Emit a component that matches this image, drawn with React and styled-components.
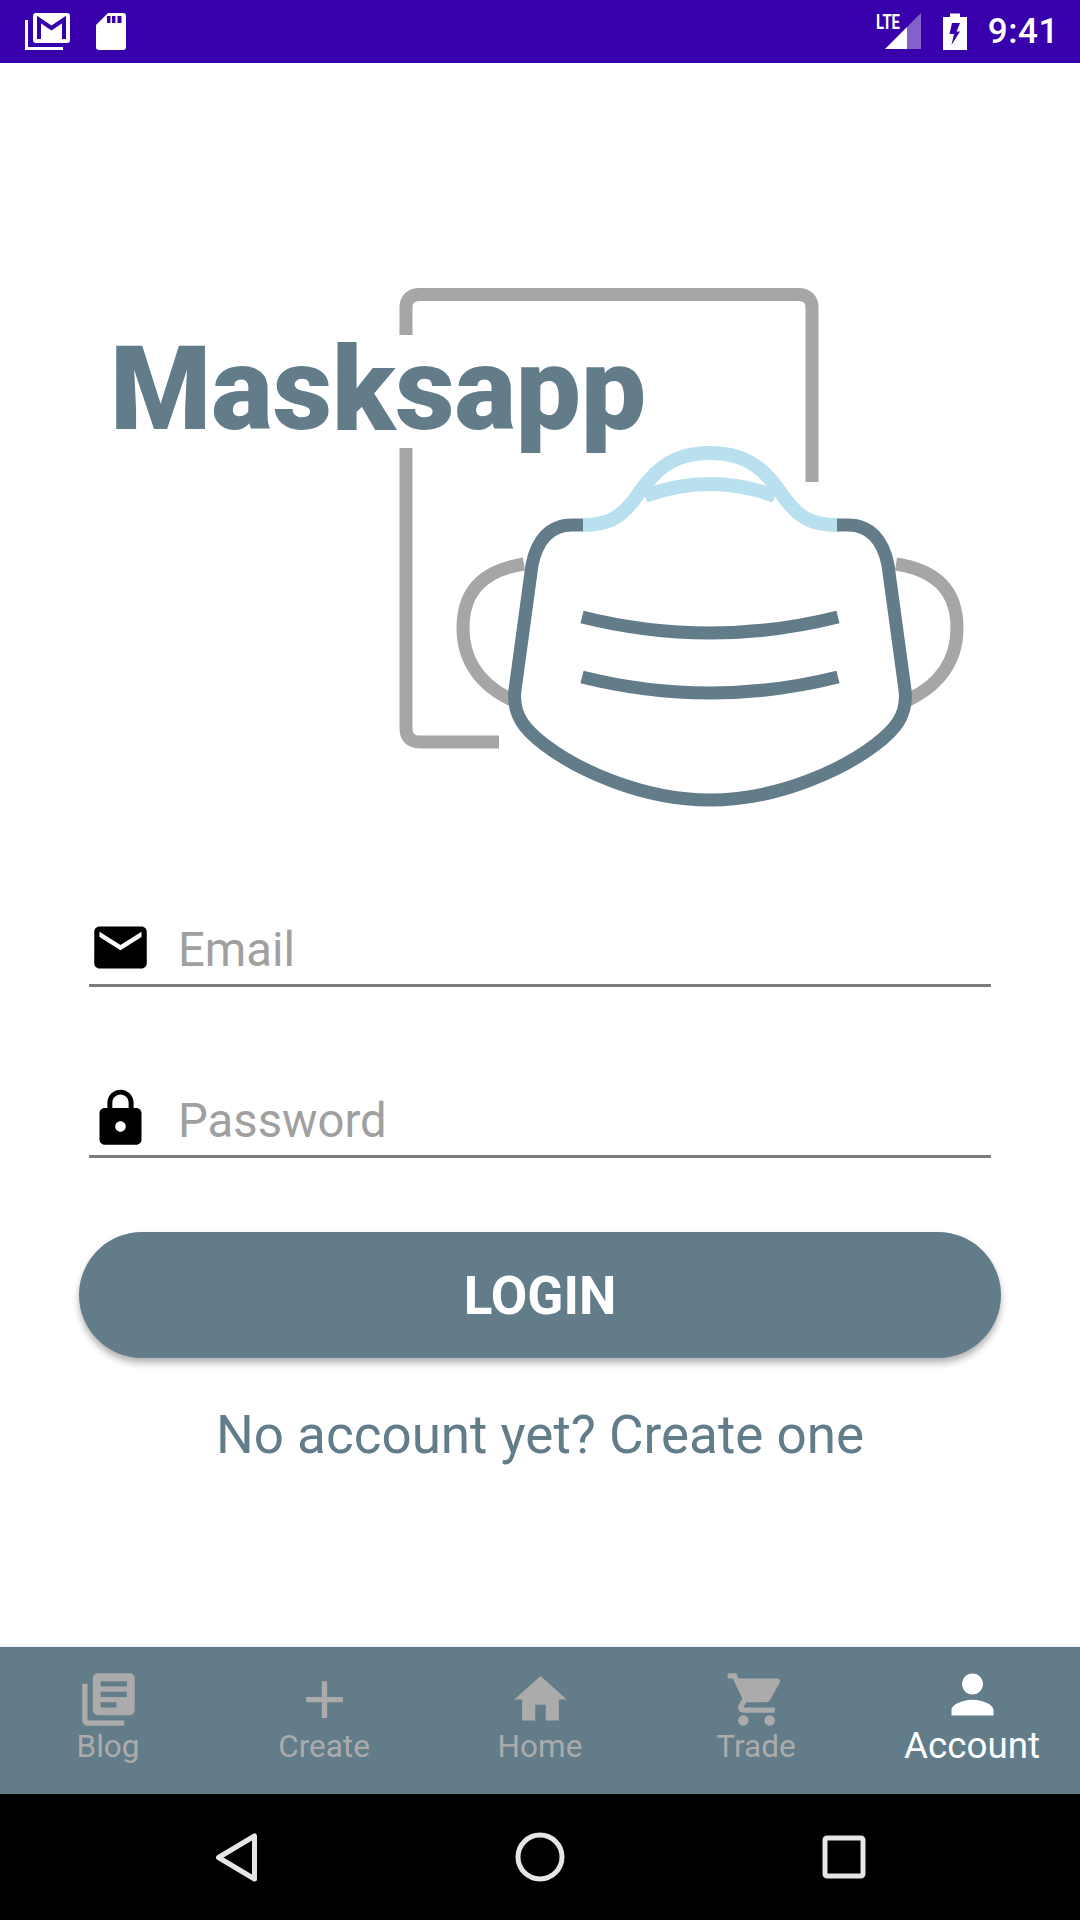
import React from 'react';
import styled, { createGlobalStyle } from 'styled-components';

const GlobalStyle = createGlobalStyle`
  html, body {
    margin: 0;
    padding: 0;
    background: #fff;
    font-family: Roboto, "Liberation Sans", sans-serif;
  }
`;

const Screen = styled.div`
  width: 1080px;
  height: 1920px;
  display: flex;
  flex-direction: column;
  overflow: hidden;
`;

const StatusBar = styled.header`
  height: 63px;
  flex: none;
  background: #3700ab;
  display: flex;
  justify-content: space-between;
  align-items: center;
  padding: 0 21px 0 24px;
  box-sizing: border-box;
`;

const StatusGroup = styled.div`
  display: flex;
  align-items: center;
  gap: ${(props) => props.$gap}px;
`;

const Clock = styled.span`
  color: #fff;
  font-size: 35px;
  font-weight: 500;
  line-height: 41px;
  letter-spacing: 0.6px;
`;

const Main = styled.main`
  flex: 1;
  display: flex;
  flex-direction: column;
  align-items: center;
  background: #fff;
`;

const Logo = styled.svg`
  display: block;
  width: 900px;
  height: 550px;
  margin-top: 207px;
  flex: none;
`;

const Form = styled.form`
  display: flex;
  flex-direction: column;
  align-items: center;
  margin-top: 95px;
`;

const Field = styled.label`
  width: 902px;
  height: 72px;
  margin-bottom: 99px;
  display: flex;
  gap: 26px;
  border-bottom: 3px solid #7c7c7c;
  box-sizing: border-box;
  svg {
    width: 63px;
    height: 63px;
    margin-top: 1px;
    fill: #000;
    flex: none;
  }
`;

const FieldText = styled.span`
  color: #a0a0a0;
  font-size: 47.25px;
  line-height: 55px;
  padding-top: 8px;
`;

const LoginButton = styled.button`
  width: 922px;
  height: 126px;
  margin-top: -25px;
  padding: 2px 0 0;
  border: 0;
  border-radius: 63px;
  background: #627c8a;
  color: #fff;
  font-family: Roboto, sans-serif;
  font-size: 53px;
  font-weight: 700;
  box-shadow: 0 5px 7px rgba(0, 0, 0, 0.3);
`;

const SignupLink = styled.a`
  margin-top: 46px;
  color: #627c8a;
  font-size: 53px;
  line-height: 62px;
`;

const BottomNav = styled.nav`
  height: 147px;
  flex: none;
  background: #627c8a;
  display: grid;
  grid-template-columns: repeat(5, 1fr);
  box-shadow: 0 -1px 4px rgba(0, 0, 0, 0.08);
`;

const NavItem = styled.div`
  display: flex;
  flex-direction: column;
  align-items: center;
  padding-top: ${(props) => (props.$active ? '15.75px' : '21px')};
  color: ${(props) => (props.$active ? '#fff' : '#ababab')};
  svg {
    width: 63px;
    height: 63px;
    fill: currentColor;
  }
`;

const NavLabel = styled.span`
  font-size: ${(props) => (props.$active ? '36.75px' : '31.5px')};
  line-height: ${(props) => (props.$active ? '43px' : '37px')};
  margin-top: ${(props) => (props.$active ? '-2px' : '-3px')};
`;

const SystemBar = styled.div`
  height: 126px;
  flex: none;
  background: #000;
  display: flex;
  justify-content: center;
  align-items: center;
  gap: 243px;
  svg {
    width: 60px;
    height: 60px;
    fill: none;
    stroke: #e6e6e6;
    stroke-width: 5;
    stroke-linejoin: round;
  }
`;

const navItems = [
  {
    label: 'Blog',
    path: 'M4 6H2v14c0 1.1.9 2 2 2h14v-2H4V6zm16-4H8c-1.1 0-2 .9-2 2v12c0 1.1.9 2 2 2h12c1.1 0 2-.9 2-2V4c0-1.1-.9-2-2-2zm-1 9H9V9h10v2zm-4 4H9v-2h6v2zm4-8H9V5h10v2z',
  },
  { label: 'Create', path: 'M19 13h-6v6h-2v-6H5v-2h6V5h2v6h6v2z' },
  { label: 'Home', path: 'M10 20v-6h4v6h5v-8h3L12 3 2 12h3v8z' },
  {
    label: 'Trade',
    path: 'M7 18c-1.1 0-1.99.9-1.99 2S5.9 22 7 22s2-.9 2-2-.9-2-2-2zM1 2v2h2l3.6 7.59-1.35 2.45c-.16.28-.25.61-.25.96 0 1.1.9 2 2 2h12v-2H7.42c-.14 0-.25-.11-.25-.25l.03-.12.9-1.63h7.45c.75 0 1.41-.41 1.75-1.03l3.58-6.49c.08-.14.12-.31.12-.48 0-.55-.45-1-1-1H5.21l-.94-2H1zm16 16c-1.1 0-1.99.9-1.99 2s.89 2 1.99 2 2-.9 2-2-.9-2-2-2z',
  },
  {
    label: 'Account',
    active: true,
    path: 'M12 12c2.21 0 4-1.79 4-4s-1.79-4-4-4-4 1.79-4 4 1.79 4 4 4zm0 2c-2.67 0-8 1.34-8 4v2h16v-2c0-2.66-5.33-4-8-4z',
  },
];

const StatusIcons = () => (
  <StatusGroup $gap={23}>
    <svg width="48" height="40" viewBox="24 12 48 40">
      <rect x="33" y="13" width="37" height="30" rx="3" fill="#fff" />
      <path d="M39 39V19.5L51.5 28L64 19.5V39" fill="none" stroke="#3700ab" strokeWidth="4" />
      <path d="M26.5 20V48.5H63" fill="none" stroke="#fff" strokeWidth="3" />
    </svg>
    <svg width="32" height="40" viewBox="95 12 32 40">
      <path
        d="M108 13H123a3 3 0 0 1 3 3V47a3 3 0 0 1-3 3H99a3 3 0 0 1-3-3V25Z"
        fill="#fff"
      />
      <path d="M107 16h3.5v7H107zM112 16h3.5v7H112zM117.5 16h4v7h-4z" fill="#3700ab" />
    </svg>
  </StatusGroup>
);

const StatusRight = () => (
  <StatusGroup $gap={20}>
    <svg width="48" height="52" viewBox="874 6 48 52">
      <path d="M907 27L921 13V49H907Z" fill="#fff" opacity="0.38" />
      <path d="M885 49L907 27V49Z" fill="#fff" />
      <text
        x="876"
        y="29"
        fontFamily="Roboto, sans-serif"
        fontWeight="700"
        fontSize="20"
        fill="#fff"
        textLength="24"
        lengthAdjust="spacingAndGlyphs"
      >
        LTE
      </text>
    </svg>
    <svg width="26" height="42" viewBox="942 10 26 42">
      <path d="M950 12.5H960V16H967V49H943V16H950Z" fill="#fff" />
      <path d="M952 22H960L956.5 30.5H960L951.5 44L954 33H949.5Z" fill="#3700ab" />
    </svg>
    <Clock>9:41</Clock>
  </StatusGroup>
);

const LogoMark = () => (
  <Logo viewBox="90 270 900 550">
    <g fill="none" stroke="#a6a6a6" strokeWidth="13">
      <path d="M406 335V308Q406 294.5 420 294.5H798Q812 294.5 812 308V482" />
      <path d="M406 448V728Q406 742 420 742H499" />
      <path d="M524 564C485 570 463 590 463 628C463 660 480 685 512 700" />
      <path d="M896 564C935 570 957 590 957 628C957 660 940 685 908 700" />
    </g>
    <text
      x="110"
      y="429"
      fontFamily="Roboto, sans-serif"
      fontWeight="900"
      fontSize="117"
      fill="#627c8a"
      textLength="536"
      lengthAdjust="spacingAndGlyphs"
    >
      Masksapp
    </text>
    <g fill="none" stroke="#b9e0ee" strokeWidth="14">
      <path d="M583 525C608 525 620 518 634 500C650 478 665 453 710 453C755 453 770 478 786 500C800 518 812 525 837 525" />
      <path d="M645 496Q710 472 775 496" />
    </g>
    <g fill="none" stroke="#627c8a">
      <path
        strokeWidth="13"
        d="M583 525H572C550 525 537 540 532 565L515 690C512 715 525 730 545 745C575 768 640 800 710 800C780 800 845 768 875 745C895 730 908 715 905 690L888 565C883 540 870 525 848 525H837"
      />
      <path strokeWidth="13" d="M582 617Q710 649 838 617" />
      <path strokeWidth="13" d="M582 677Q710 709 838 677" />
    </g>
  </Logo>
);

const App = () => {
  return (
    <Screen>
      <GlobalStyle />
      <StatusBar>
        <StatusIcons />
        <StatusRight />
      </StatusBar>
      <Main>
        <LogoMark />
        <Form>
          <Field>
            <svg viewBox="0 0 24 24">
              <path d="M20 4H4c-1.1 0-1.99.9-1.99 2L2 18c0 1.1.9 2 2 2h16c1.1 0 2-.9 2-2V6c0-1.1-.9-2-2-2zm0 4l-8 5-8-5V6l8 5 8-5v2z" />
            </svg>
            <FieldText>Email</FieldText>
          </Field>
          <Field>
            <svg viewBox="0 0 24 24">
              <path d="M18 8h-1V6c0-2.76-2.24-5-5-5S7 3.24 7 6v2H6c-1.1 0-2 .9-2 2v10c0 1.1.9 2 2 2h12c1.1 0 2-.9 2-2V10c0-1.1-.9-2-2-2zm-6 9c-1.1 0-2-.9-2-2s.9-2 2-2 2 .9 2 2-.9 2-2 2zm3.1-9H8.9V6c0-1.71 1.39-3.1 3.1-3.1 1.71 0 3.1 1.39 3.1 3.1v2z" />
            </svg>
            <FieldText>Password</FieldText>
          </Field>
          <LoginButton type="button">LOGIN</LoginButton>
          <SignupLink>No account yet? Create one</SignupLink>
        </Form>
      </Main>
      <BottomNav>
        {navItems.map((item) => (
          <NavItem key={item.label} $active={item.active}>
            <svg viewBox="0 0 24 24">
              <path d={item.path} />
            </svg>
            <NavLabel $active={item.active}>{item.label}</NavLabel>
          </NavItem>
        ))}
      </BottomNav>
      <SystemBar>
        <svg viewBox="0 0 60 60">
          <path d="M11.5 30.5L47.5 9V52Z" />
        </svg>
        <svg viewBox="0 0 60 60">
          <circle cx="30" cy="30" r="22" />
        </svg>
        <svg viewBox="0 0 60 60">
          <rect x="12" y="11" width="38" height="38" rx="2" />
        </svg>
      </SystemBar>
    </Screen>
  );
};

export default App;
